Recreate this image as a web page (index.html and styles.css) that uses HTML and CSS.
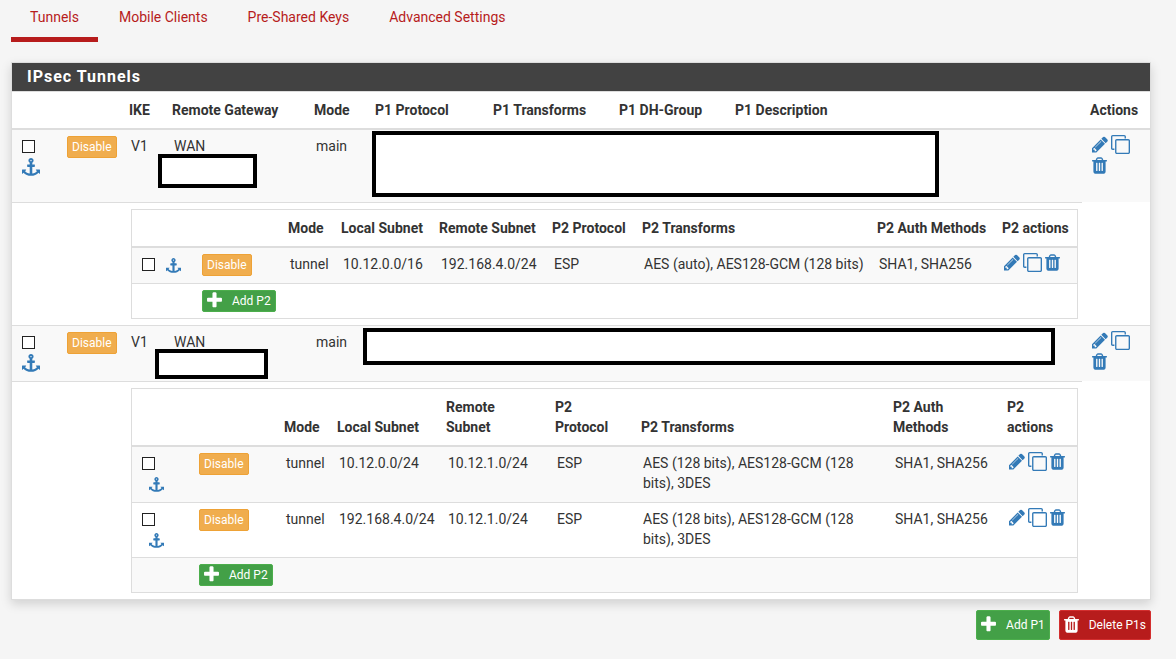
FILE: index.html
```html
<!DOCTYPE html>
<html lang="en">
<head>
<meta charset="utf-8">
<title>IPsec Tunnels</title>
<link rel="stylesheet" href="styles.css">
</head>
<body>
<svg class="sprite" aria-hidden="true">
  <symbol id="pencil" viewBox="128 0 1536 1792"><path d="M491 1536l91-91-235-235-91 91v107h128v128h107zm523-928q0-22-22-22-10 0-17 7l-542 542q-7 7-7 17 0 22 22 22 10 0 17-7l542-542q7-7 7-17zm-54-192l416 416-832 832h-416v-416zm683 96q0 53-37 90l-166 166-416-416 166-165q36-38 90-38 53 0 91 38l235 234q37 39 37 91z"/></symbol>
  <symbol id="clone" viewBox="0 0 1792 1792"><path d="M1664 1632v-1088q0-13-9.5-22.5t-22.5-9.5h-1088q-13 0-22.5 9.5t-9.5 22.5v1088q0 13 9.5 22.5t22.5 9.5h1088q13 0 22.5-9.5t9.5-22.5zm128-1088v1088q0 66-47 113t-113 47h-1088q-66 0-113-47t-47-113v-1088q0-66 47-113t113-47h1088q66 0 113 47t47 113zm-384-384v160h-128v-160q0-13-9.5-22.5t-22.5-9.5h-1088q-13 0-22.5 9.5t-9.5 22.5v1088q0 13 9.5 22.5t22.5 9.5h160v128h-160q-66 0-113-47t-47-113v-1088q0-66 47-113t113-47h1088q66 0 113 47t47 113z"/></symbol>
  <symbol id="trash" viewBox="192 0 1408 1792"><path d="M704 1376v-704q0-14-9-23t-23-9h-64q-14 0-23 9t-9 23v704q0 14 9 23t23 9h64q14 0 23-9t9-23zm256 0v-704q0-14-9-23t-23-9h-64q-14 0-23 9t-9 23v704q0 14 9 23t23 9h64q14 0 23-9t9-23zm256 0v-704q0-14-9-23t-23-9h-64q-14 0-23 9t-9 23v704q0 14 9 23t23 9h64q14 0 23-9t9-23zm-544-992h448l-48-117q-7-9-17-11h-317q-10 2-17 11zm928 32v64q0 14-9 23t-23 9h-96v948q0 83-47 143.5t-113 60.5h-832q-66 0-113-58.5t-47-141.5v-952h-96q-14 0-23-9t-9-23v-64q0-14 9-23t23-9h309l70-167q15-37 54-63t79-26h320q40 0 79 26t54 63l70 167h309q14 0 23 9t9 23z"/></symbol>
  <symbol id="anchor" viewBox="0 0 1792 1792"><path d="M960 256q0-26-19-45t-45-19-45 19-19 45 19 45 45 19 45-19 19-45zm832 928v352q0 22-20 30-8 2-12 2-12 0-23-9l-93-93q-119 143-318.5 226.5t-429.5 83.5-429.5-83.5-318.5-226.5l-93 93q-9 9-23 9-4 0-12-2-20-8-20-30v-352q0-14 9-23t23-9h352q22 0 30 20 8 19-7 35l-100 100q67 91 189.5 153.5t271.5 82.5v-647h-192q-26 0-45-19t-19-45v-128q0-26 19-45t45-19h192v-163q-58-34-93-92.5t-35-128.5q0-106 75-181t181-75 181 75 75 181q0 70-35 128.5t-93 92.5v163h192q26 0 45 19t19 45v128q0 26-19 45t-45 19h-192v647q149-20 271.5-82.5t189.5-153.5l-100-100q-15-16-7-35 8-20 30-20h352q14 0 23 9t9 23z"/></symbol>
  <symbol id="plus" viewBox="192 0 1408 1792"><path d="M1600 736v192q0 40-28 68t-68 28h-416v416q0 40-28 68t-68 28h-192q-40 0-68-28t-28-68v-416h-416q-40 0-68-28t-28-68v-192q0-40 28-68t68-28h416v-416q0-40 28-68t68-28h192q40 0 68 28t28 68v416h416q40 0 68 28t28 68z"/></symbol>
</svg>

<nav class="tabs">
  <a class="tab active" href="#tunnels">Tunnels</a>
  <a class="tab" href="#mobile">Mobile Clients</a>
  <a class="tab" href="#psk">Pre-Shared Keys</a>
  <a class="tab" href="#advanced">Advanced Settings</a>
</nav>

<main>
<section class="panel" id="tunnels">
  <h2 class="panel-title">IPsec Tunnels</h2>
  <table class="grid p1-table">
    <colgroup><col class="w-45"><col class="w-64"><col class="w-43"><col class="w-142"><col class="w-61"><col class="w-118"><col class="w-126"><col class="w-116"><col><col class="w-68"></colgroup>
    <thead>
      <tr><th></th><th></th><th>IKE</th><th>Remote Gateway</th><th>Mode</th><th>P1 Protocol</th><th>P1 Transforms</th><th>P1 DH-Group</th><th>P1 Description</th><th>Actions</th></tr>
    </thead>
    <tbody>
      <tr class="p1-row tall">
        <td><div class="select-stack"><input type="checkbox" aria-label="Select tunnel 1"><a href="#t1" aria-label="Move tunnel 1"><svg class="icon medium"><use href="#anchor"/></svg></a></div></td>
        <td><button class="btn warn" type="button">Disable</button></td>
        <td>V1</td>
        <td class="covered">WAN<span class="redact gateway-a"></span></td>
        <td>main</td>
        <td class="covered" colspan="4"><span class="redact details-a"></span></td>
        <td class="action-cell"><div class="actions">
          <a href="#edit" aria-label="Edit"><svg class="icon mid"><use href="#pencil"/></svg></a>
          <a href="#copy" aria-label="Copy"><svg class="icon wide"><use href="#clone"/></svg></a>
          <a href="#delete" aria-label="Delete"><svg class="icon slim"><use href="#trash"/></svg></a>
        </div></td>
      </tr>
      <tr>
        <td colspan="2"></td>
        <td class="nest" colspan="7">
          <table class="grid p2-table">
            <colgroup><col class="w-60"><col class="w-88"><col class="w-53"><col class="w-98"><col class="w-113"><col class="w-90"><col><col class="w-125"><col class="w-83"></colgroup>
            <thead>
              <tr><th></th><th></th><th>Mode</th><th>Local Subnet</th><th>Remote Subnet</th><th>P2 Protocol</th><th>P2 Transforms</th><th>P2 Auth Methods</th><th>P2 actions</th></tr>
            </thead>
            <tbody>
              <tr class="p2-row odd">
                <td><div class="select-line"><input type="checkbox" aria-label="Select P2 entry"><a href="#p2" aria-label="Move P2 entry"><svg class="icon small"><use href="#anchor"/></svg></a></div></td>
                <td><button class="btn warn" type="button">Disable</button></td>
                <td>tunnel</td><td>10.12.0.0/16</td><td>192.168.4.0/24</td><td>ESP</td><td>AES (auto), AES128-GCM (128 bits)</td><td>SHA1, SHA256</td>
                <td class="action-cell"><div class="actions">
                  <a href="#edit" aria-label="Edit"><svg class="icon mid"><use href="#pencil"/></svg></a>
                  <a href="#copy" aria-label="Copy"><svg class="icon wide"><use href="#clone"/></svg></a>
                  <a href="#delete" aria-label="Delete"><svg class="icon slim"><use href="#trash"/></svg></a>
                </div></td>
              </tr>
              <tr>
                <td></td>
                <td colspan="8"><button class="btn success" type="button"><svg class="icon slim"><use href="#plus"/></svg>Add P2</button></td>
              </tr>
            </tbody>
          </table>
        </td>
      </tr>
      <tr class="p1-row">
        <td><div class="select-stack"><input type="checkbox" aria-label="Select tunnel 2"><a href="#t2" aria-label="Move tunnel 2"><svg class="icon medium"><use href="#anchor"/></svg></a></div></td>
        <td><button class="btn warn" type="button">Disable</button></td>
        <td>V1</td>
        <td class="covered">WAN<span class="redact gateway-b"></span></td>
        <td>main</td>
        <td class="covered" colspan="4"><span class="redact details-b"></span></td>
        <td class="action-cell"><div class="actions">
          <a href="#edit" aria-label="Edit"><svg class="icon mid"><use href="#pencil"/></svg></a>
          <a href="#copy" aria-label="Copy"><svg class="icon wide"><use href="#clone"/></svg></a>
          <a href="#delete" aria-label="Delete"><svg class="icon slim"><use href="#trash"/></svg></a>
        </div></td>
      </tr>
      <tr>
        <td colspan="2"></td>
        <td class="nest" colspan="7">
          <table class="grid p2-table">
            <colgroup><col class="w-57"><col class="w-87"><col class="w-53"><col class="w-109"><col class="w-109"><col class="w-86"><col><col class="w-114"><col class="w-78"></colgroup>
            <thead>
              <tr><th></th><th></th><th>Mode</th><th>Local Subnet</th><th>Remote<br>Subnet</th><th>P2<br>Protocol</th><th>P2 Transforms</th><th>P2 Auth<br>Methods</th><th>P2<br>actions</th></tr>
            </thead>
            <tbody>
              <tr class="p2-row double odd">
                <td><div class="select-stack"><input type="checkbox" aria-label="Select P2 entry 1"><a class="inset" href="#p2a" aria-label="Move P2 entry 1"><svg class="icon small"><use href="#anchor"/></svg></a></div></td>
                <td><button class="btn warn" type="button">Disable</button></td>
                <td>tunnel</td><td>10.12.0.0/24</td><td>10.12.1.0/24</td><td>ESP</td><td>AES (128 bits), AES128-GCM (128 bits), 3DES</td><td>SHA1, SHA256</td>
                <td class="action-cell"><div class="actions">
                  <a href="#edit" aria-label="Edit"><svg class="icon mid"><use href="#pencil"/></svg></a>
                  <a href="#copy" aria-label="Copy"><svg class="icon wide"><use href="#clone"/></svg></a>
                  <a href="#delete" aria-label="Delete"><svg class="icon slim"><use href="#trash"/></svg></a>
                </div></td>
              </tr>
              <tr class="p2-row double">
                <td><div class="select-stack"><input type="checkbox" aria-label="Select P2 entry 2"><a class="inset" href="#p2b" aria-label="Move P2 entry 2"><svg class="icon small"><use href="#anchor"/></svg></a></div></td>
                <td><button class="btn warn" type="button">Disable</button></td>
                <td>tunnel</td><td>192.168.4.0/24</td><td>10.12.1.0/24</td><td>ESP</td><td>AES (128 bits), AES128-GCM (128 bits), 3DES</td><td>SHA1, SHA256</td>
                <td class="action-cell"><div class="actions">
                  <a href="#edit" aria-label="Edit"><svg class="icon mid"><use href="#pencil"/></svg></a>
                  <a href="#copy" aria-label="Copy"><svg class="icon wide"><use href="#clone"/></svg></a>
                  <a href="#delete" aria-label="Delete"><svg class="icon slim"><use href="#trash"/></svg></a>
                </div></td>
              </tr>
              <tr class="odd">
                <td></td>
                <td colspan="8"><button class="btn success" type="button"><svg class="icon slim"><use href="#plus"/></svg>Add P2</button></td>
              </tr>
            </tbody>
          </table>
        </td>
      </tr>
    </tbody>
  </table>
</section>

<div class="footer-actions">
  <button class="btn large success" type="button"><svg class="icon slim"><use href="#plus"/></svg>Add P1</button>
  <button class="btn large danger" type="button"><svg class="icon slim"><use href="#trash"/></svg>Delete P1s</button>
</div>
</main>
</body>
</html>
```
FILE: styles.css
```css
* { box-sizing: border-box; }
body {
  margin: 0;
  padding: 0 25px 19px 11px;
  background: #f5f5f5;
  color: #333;
  font: 14px/20px Roboto, "Liberation Sans", sans-serif;
}
a { color: #337ab7; text-decoration: none; }
.sprite { display: none; }

.tabs { display: flex; gap: 2px; margin-bottom: 20px; }
.tab {
  padding: 7px 19px 10px;
  border-bottom: 5px solid transparent;
  color: #b71c1c;
}
.tab.active { border-color: #b71c1c; }

.panel {
  border: 1px solid #ddd;
  background: #fff;
  box-shadow: 0 4px 10px rgba(0, 0, 0, 0.15);
}
.panel-title {
  margin: 0;
  padding: 4px 15px;
  background: #424242;
  color: #fff;
  font-size: 16px;
  font-weight: 700;
  letter-spacing: 1px;
  border-bottom: 1px solid #ddd;
}

.grid {
  width: 100%;
  table-layout: fixed;
  border-collapse: separate;
  border-spacing: 0;
}
.grid th {
  padding: 8px 0 8px 8px;
  border-bottom: 2px solid #ddd;
  font-weight: 700;
  text-align: left;
  vertical-align: bottom;
  white-space: nowrap;
}
.grid td { padding: 6px 10px; vertical-align: top; }
.grid tbody > tr + tr > td { border-top: 1px solid #ddd; }
.grid td.nest { padding-right: 4px; }
.grid td.action-cell { padding-top: 5px; }
.p2-table { border: 1px solid #ddd; }
.p2-table td { padding-right: 0; }
.p1-row > td, .odd > td { background: #f9f9f9; }
.p1-row { height: 56px; }
.p1-row.tall { height: 72px; }
.p2-row { height: 35px; }
.p2-row.double { height: 55px; }

/* Column widths */
.w-43 { width: 43px; }
.w-45 { width: 45px; }
.w-53 { width: 53px; }
.w-57 { width: 57px; }
.w-60 { width: 60px; }
.w-61 { width: 61px; }
.w-64 { width: 64px; }
.w-68 { width: 68px; }
.w-78 { width: 78px; }
.w-83 { width: 83px; }
.w-86 { width: 86px; }
.w-87 { width: 87px; }
.w-88 { width: 88px; }
.w-90 { width: 90px; }
.w-98 { width: 98px; }
.w-109 { width: 109px; }
.w-113 { width: 113px; }
.w-114 { width: 114px; }
.w-116 { width: 116px; }
.w-118 { width: 118px; }
.w-125 { width: 125px; }
.w-126 { width: 126px; }
.w-142 { width: 142px; }

input[type="checkbox"] {
  appearance: none;
  width: 13px;
  height: 13px;
  margin: 0;
  border: 1px solid #222;
  background: #fff;
}
.select-stack {
  display: flex;
  flex-direction: column;
  align-items: flex-start;
  gap: 5px;
  padding-top: 4px;
}
.select-line { display: flex; gap: 11px; padding-top: 4px; }
.inset { padding: 2px 0 0 7px; }

.icon { display: block; height: 19px; fill: currentColor; }
.icon.wide { width: 19px; }
.icon.mid { width: 16px; }
.icon.slim { width: 15px; }
.icon.medium { width: 18px; height: 18px; }
.icon.small { width: 15px; height: 15px; }
.actions { display: flex; flex-wrap: wrap; gap: 2px 3px; }

.btn {
  display: inline-flex;
  align-items: center;
  gap: 10px;
  height: 22px;
  padding: 0 4px;
  border: 1px solid;
  border-radius: 2px;
  color: #fff;
  font: 12px/18px Roboto, "Liberation Sans", sans-serif;
  vertical-align: top;
}
.btn.large { height: 30px; }
.btn .icon { margin-top: -2px; }
.warn { background: #f0ad4e; border-color: #eea236; }
.success { background: #43a047; border-color: #4cae4c; }
.danger { background: #b71c1c; border-color: #d32f2f; }

.covered { position: relative; }
.redact { position: absolute; border: 4px solid #000; background: #fff; }
.gateway-a { left: -6px; top: 24px; width: 99px; height: 34px; }
.details-a { left: 5px; right: 143px; top: 1px; height: 66px; }
.gateway-b { left: -9px; top: 23px; width: 113px; height: 30px; }
.details-b { left: -4px; right: 27px; top: 2px; height: 37px; }

.footer-actions {
  display: flex;
  justify-content: flex-end;
  gap: 9px;
  padding-top: 10px;
}
```
